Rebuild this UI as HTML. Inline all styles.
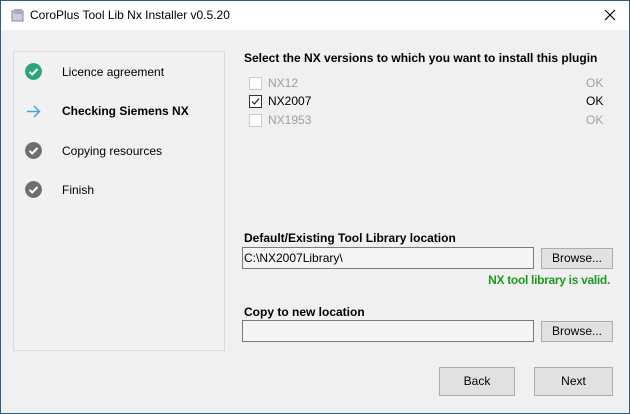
<!DOCTYPE html><html><head><style>
*{margin:0;padding:0;box-sizing:border-box}
body{width:630px;height:414px;overflow:hidden;font-family:"Liberation Sans",sans-serif;font-size:12px;color:#000}
#w{position:absolute;left:0;top:0;width:630px;height:414px;background:#f0f0f0}
#bd{position:absolute;left:0;top:0;width:630px;height:414px;border:1px solid #2d5f80;z-index:5;pointer-events:none}
#t{position:absolute;left:0;top:0;width:630px;height:30px;background:#fff}
.a{position:absolute;white-space:nowrap}
#lp{position:absolute;left:13px;top:51px;width:212px;height:300px;border:1px solid #dadada;background:#f1f1f1}
.ic{position:absolute;left:26px;width:17px;height:17px;border-radius:50%}
.cb{position:absolute;left:249px;width:13px;height:13px;border:1px solid #ccc;background:#fff}
.tb{position:absolute;left:242px;width:292px;height:22px;border:1px solid #7a7a7a;background:#f5f5f5}
.bt{position:absolute;border:1px solid #adadad;background:#e1e1e1;text-align:center}
</style></head><body><div id="w">
<div id="t">
<svg class="a" style="left:11px;top:8px" width="14" height="14"><rect x="1" y="3" width="11" height="10" fill="#ccd" stroke="#889"/><rect x="3" y="1" width="8" height="5" fill="#aab"/></svg>
<div class="a" style="left:30px;top:8px;font-size:12px">CoroPlus Tool Lib Nx Installer v0.5.20</div>
<svg class="a" style="left:604px;top:9px" width="12" height="12"><path d="M1 1L11 11M11 1L1 11" stroke="#000" stroke-width="1.2"/></svg>
</div>
<div id="lp"></div>
<svg class="ic" style="top:63px;left:25px" viewBox="0 0 17 17"><circle cx="8.5" cy="8.5" r="8.5" fill="#2aa77a"/><path d="M4.5 8.8l2.7 2.7 5.3-5.5" stroke="#fff" stroke-width="2" fill="none"/></svg>
<div class="a" style="left:62px;top:65px">Licence agreement</div>
<svg class="a" style="left:25px;top:103px" width="17" height="17"><path d="M2 8.5h13M9 3l5.5 5.5L9 14" stroke="#4aa3df" stroke-width="1.5" fill="none"/></svg>
<div class="a" style="left:62px;top:104px;font-weight:bold">Checking Siemens NX</div>
<svg class="ic" style="top:142px;left:25px" viewBox="0 0 17 17"><circle cx="8.5" cy="8.5" r="8.5" fill="#6f6f6f"/><path d="M4.5 8.8l2.7 2.7 5.3-5.5" stroke="#fff" stroke-width="2" fill="none"/></svg>
<div class="a" style="left:62px;top:144px">Copying resources</div>
<svg class="ic" style="top:181px;left:25px" viewBox="0 0 17 17"><circle cx="8.5" cy="8.5" r="8.5" fill="#6f6f6f"/><path d="M4.5 8.8l2.7 2.7 5.3-5.5" stroke="#fff" stroke-width="2" fill="none"/></svg>
<div class="a" style="left:62px;top:183px">Finish</div>
<div class="a" style="left:244px;top:51px;font-weight:bold">Select the NX versions to which you want to install this plugin</div>
<div class="cb" style="top:77px"></div><div class="a" style="left:268px;top:76px;color:#a0a0a0">NX12</div><div class="a" style="left:586px;top:76px;color:#a0a0a0">OK</div>
<div class="cb" style="top:95px;border-color:#333"><svg width="11" height="11" style="position:absolute;left:0;top:0"><path d="M2 5.5l2.5 2.5 4.5-5.5" stroke="#222" stroke-width="1.2" fill="none"/></svg></div><div class="a" style="left:268px;top:94px">NX2007</div><div class="a" style="left:586px;top:94px">OK</div>
<div class="cb" style="top:114px"></div><div class="a" style="left:268px;top:113px;color:#a0a0a0">NX1953</div><div class="a" style="left:586px;top:113px;color:#a0a0a0">OK</div>
<div class="a" style="left:244px;top:231px;font-weight:bold">Default/Existing Tool Library location</div>
<div class="tb" style="top:247px"><span class="a" style="left:1px;top:3px">C:\NX2007Library\</span></div>
<div class="bt" style="left:541px;top:248px;width:72px;height:21px;line-height:19px">Browse...</div>
<div class="a" style="right:20px;top:273px;font-weight:bold;color:#1e9a1e;letter-spacing:-0.3px">NX tool library is valid.</div>
<div class="a" style="left:244px;top:305px;font-weight:bold">Copy to new location</div>
<div class="tb" style="top:320px"></div>
<div class="bt" style="left:541px;top:321px;width:72px;height:21px;line-height:19px">Browse...</div>
<div class="bt" style="left:439px;top:367px;width:76px;height:29px;line-height:27px">Back</div>
<div class="bt" style="left:534px;top:367px;width:79px;height:29px;line-height:27px">Next</div>
<div id="bd"></div>
</div></body></html>
